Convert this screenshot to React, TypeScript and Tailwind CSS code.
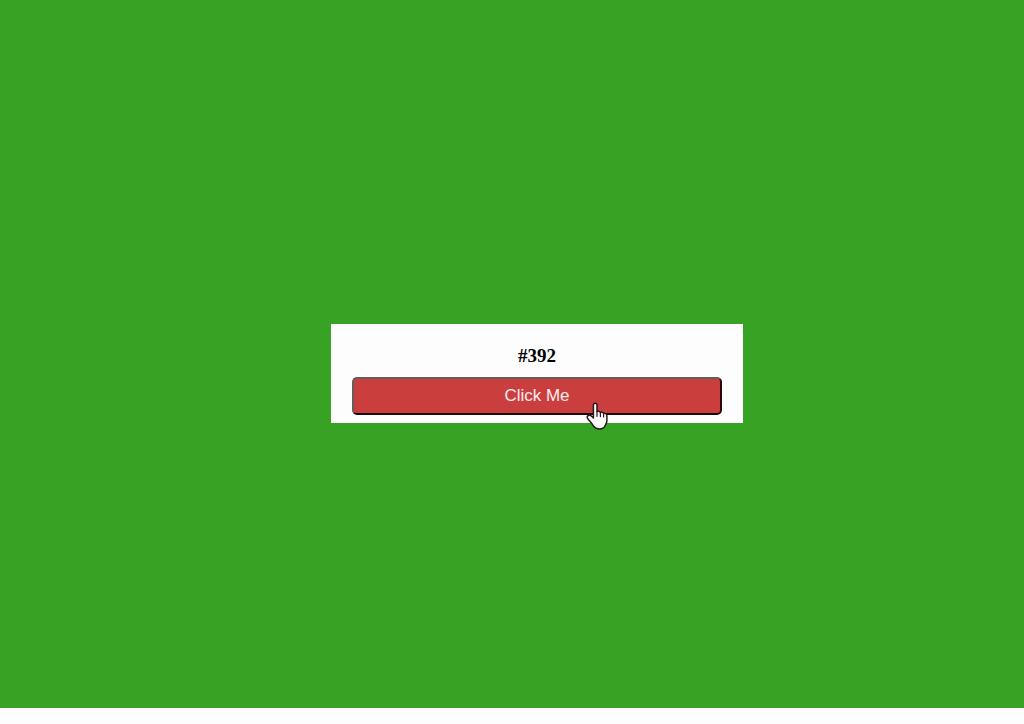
import { useState } from "react";

function HandPointer() {
  return (
    <svg
      aria-hidden="true"
      viewBox="0 0 22 28"
      className="pointer-events-none absolute top-[25px] right-[114px] h-[28px] w-[22px]"
    >
      <path
        d="M7.4 3.2C7.4 1.9 8.2 1.3 9.2 1.3S11 1.9 11 3.2V9.6C11.5 8.9 14 9 14.4 10.6C15 9.7 17.2 10 17.6 11.6C18.7 11 20.9 11.6 20.9 13.6V18.5C20.9 21.5 19.5 22.4 18.8 24.3C18.1 26.2 15.8 26.9 13.4 26.9C10.8 26.9 8.8 26.1 7.6 24.1C6.3 22 4.6 20.1 2.8 18.1C1.5 16.5 0.7 15.2 1.4 14.2C2.4 12.8 4.4 13.1 5.6 14.2L7.4 15.9Z"
        fill="#fcfafa"
        stroke="#2a181c"
        strokeWidth="1.5"
        strokeLinejoin="round"
      />
      <path
        d="M11 9.6V14.3M14.4 10.6V14.6M17.6 11.6V15"
        fill="none"
        stroke="#2a181c"
        strokeWidth="1.2"
        strokeLinecap="round"
      />
    </svg>
  );
}

export default function App() {
  const [count, setCount] = useState(392);

  return (
    <div className="flex min-h-screen flex-col bg-[#fdfdfd] pb-4">
      <main className="flex grow items-center justify-center bg-[#38a225] pt-[38px] pl-[50px]">
        <section className="w-[412px] bg-[#fdfdfd] px-[21px] pt-5 pb-2">
          <h1 className="mb-2.5 text-center font-['Liberation_Serif',serif] text-[19px] leading-[23px] font-bold text-black">
            #{count}
          </h1>
          <div className="relative">
            <button
              type="button"
              onClick={() => setCount(count + 1)}
              className="block h-[38px] w-full cursor-pointer rounded-[5px] border-2 border-t-[#695b5b] border-r-[#25090b] border-b-[#160507] border-l-[#695b5b] bg-[#cb3e3e] font-['Liberation_Sans',sans-serif] text-[17px] leading-5 text-[#f8eeee]"
            >
              Click Me
            </button>
            <HandPointer />
          </div>
        </section>
      </main>
    </div>
  );
}
